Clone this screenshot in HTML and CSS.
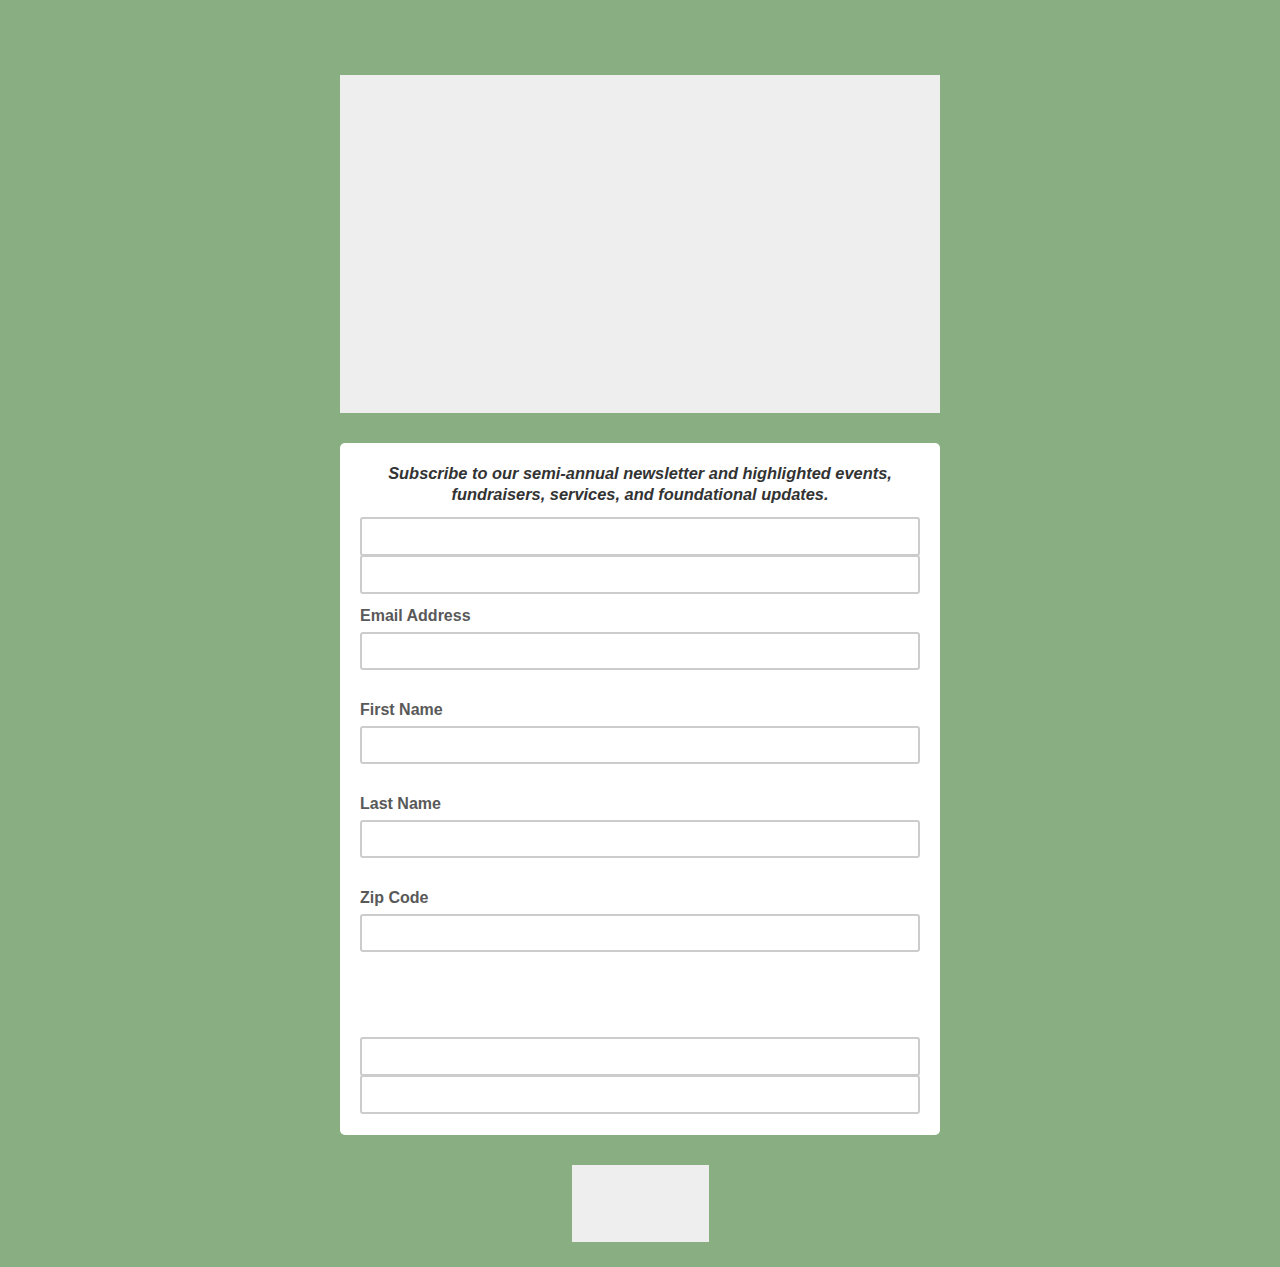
FILE: index.html
```html
<!DOCTYPE html>
<html>
<head>
<meta charset="utf-8">
<link rel="stylesheet" href="styles.css">
</head>
<body>
<div class="page">
  <div class="hero"></div>
  <form class="card">
    <p class="intro">Subscribe to our semi-annual newsletter and highlighted events, fundraisers, services, and foundational updates.</p>
    <div class="stack">
      <input class="field" type="text">
      <input class="field" type="text">
    </div>
    <div class="group first">
      <label class="label">Email Address</label>
      <input class="field" type="text">
    </div>
    <div class="group">
      <label class="label">First Name</label>
      <input class="field" type="text">
    </div>
    <div class="group">
      <label class="label">Last Name</label>
      <input class="field" type="text">
    </div>
    <div class="group">
      <label class="label">Zip Code</label>
      <input class="field" type="text">
    </div>
    <div class="spacer"></div>
    <div class="stack">
      <input class="field" type="text">
      <input class="field" type="text">
    </div>
  </form>
  <div class="footer-box"></div>
</div>
</body>
</html>
```
FILE: styles.css
```css
html, body {
  margin: 0;
  padding: 0;
  background: #89ae82;
  font-family: "Liberation Sans", Arial, sans-serif;
}
.page {
  width: 600px;
  margin: 0 auto;
  padding-top: 75px;
  display: flex;
  flex-direction: column;
  align-items: center;
}
.hero {
  width: 600px;
  height: 338px;
  background: #eeeeee;
}
.card {
  box-sizing: border-box;
  width: 600px;
  margin-top: 30px;
  background: #ffffff;
  border-radius: 5px;
  padding: 20px 20px 21px;
}
.intro {
  margin: 0 0 12px;
  text-align: center;
  font-style: italic;
  font-weight: bold;
  font-size: 16.4px;
  line-height: 21px;
  color: #333333;
}
.stack {
  display: flex;
  flex-direction: column;
}
.stack .field {
  height: 39px;
}
.stack .field + .field {
  margin-top: -1px;
}
.field {
  display: block;
  box-sizing: border-box;
  width: 100%;
  height: 38px;
  margin: 0;
  border: 2px solid #cccccc;
  border-radius: 3px;
  background: #ffffff;
  padding: 0 8px;
  font-family: inherit;
  font-size: 16px;
}
.group {
  margin-top: 30px;
}
.group.first {
  margin-top: 12px;
}
.label {
  display: block;
  font-weight: bold;
  font-size: 16px;
  line-height: 19px;
  color: #595959;
  margin-bottom: 7px;
}
.spacer {
  height: 85px;
}
.footer-box {
  width: 137px;
  height: 77px;
  margin-top: 30px;
  background: #eeeeee;
}
```
